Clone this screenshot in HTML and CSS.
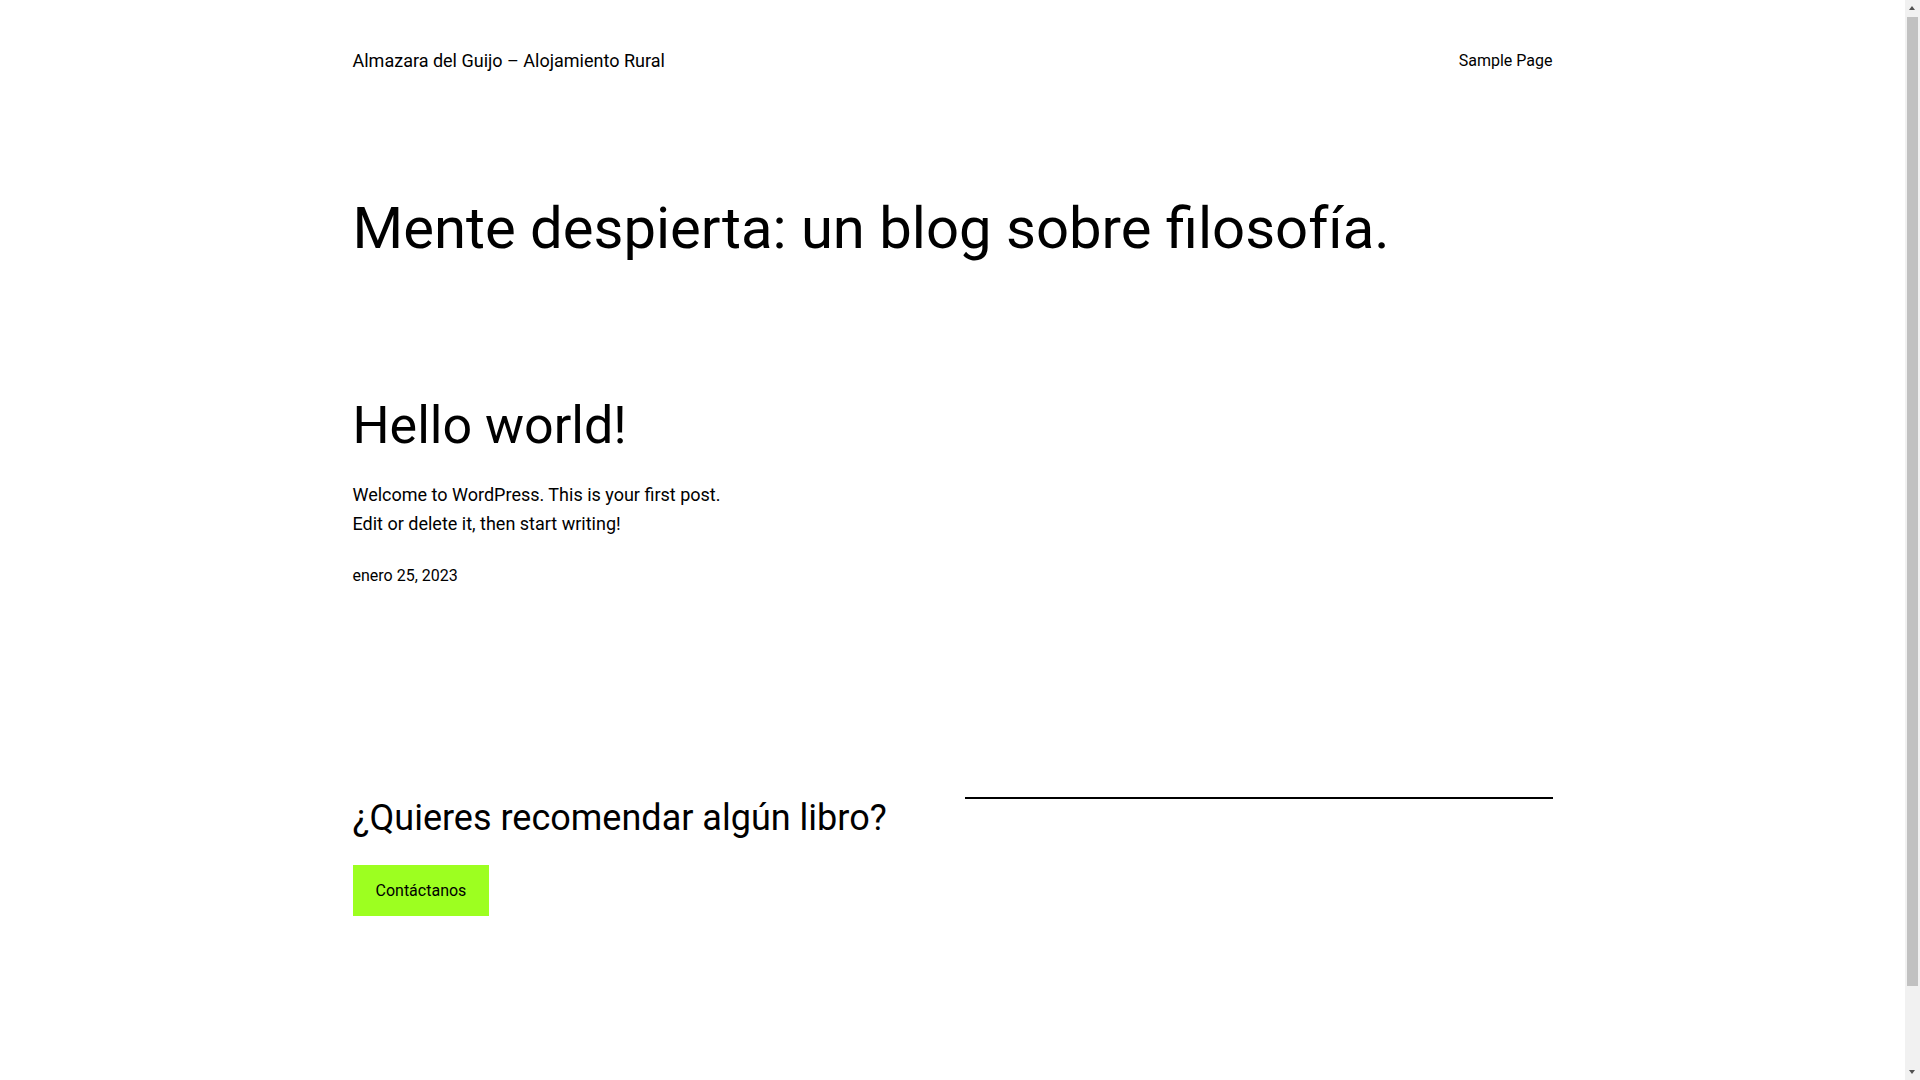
FILE: index.html
```html
<!DOCTYPE html>
<html lang="es">
<head>
<meta charset="utf-8">
<title>Almazara del Guijo – Alojamiento Rural</title>
<link rel="stylesheet" href="styles.css">
</head>
<body>
<div class="page">
  <header class="site-header">
    <a class="site-title" href="#">Almazara del Guijo – Alojamiento Rural</a>
    <nav class="site-nav"><a href="#">Sample Page</a></nav>
  </header>

  <main class="site-main">
    <h1 class="blog-title">Mente despierta: un blog sobre filosofía.</h1>

    <article class="post">
      <h2 class="post-title"><a href="#">Hello world!</a></h2>
      <div class="post-excerpt">
        <p>Welcome to WordPress. This is your first post.<br>Edit or delete it, then start writing!</p>
      </div>
      <div class="post-date">enero 25, 2023</div>
    </article>
  </main>

  <footer class="site-footer">
    <div class="cta-col">
      <h2 class="cta-title">¿Quieres recomendar algún libro?</h2>
      <a class="cta-button" href="#">Contáctanos</a>
    </div>
    <div class="sep-col">
      <hr class="separator">
    </div>
  </footer>
</div>

<div class="scrollbar" aria-hidden="true">
  <span class="sb-arrow sb-up"></span>
  <span class="sb-thumb"></span>
  <span class="sb-arrow sb-down"></span>
</div>
</body>
</html>
```
FILE: styles.css
```css
html, body {
  padding: 0;
  background: #ffffff;
  color: #000000;
}

html {
  margin: 0;
}

body {
  margin: 0 15px 0 0;
  font-family: Roboto, "Liberation Sans", Arial, sans-serif;
  font-size: 18px;
  line-height: 1.6;
}

a {
  color: inherit;
  text-decoration: none;
}

.page {
  max-width: 1200px;
  margin: 0 auto;
  padding-bottom: 250px;
}

.site-header {
  display: flex;
  justify-content: space-between;
  align-items: center;
  padding-top: 47px;
  line-height: 27px;
}

.site-title {
  font-size: 18px;
}

.site-nav {
  font-size: 16px;
}

.site-main {
  padding-top: 120px;
}

.blog-title {
  margin: 0;
  font-size: 58px;
  font-weight: 400;
  line-height: 1.2;
  letter-spacing: 0;
}

.post {
  padding-top: 131px;
}

.post-title {
  margin: 0;
  font-size: 52px;
  font-weight: 400;
  line-height: 1.2;
}

.post-excerpt p {
  margin: 24px 0 0;
  font-size: 18px;
  line-height: 28.8px;
}

.post-date {
  margin-top: 24px;
  font-size: 16px;
  line-height: 25.6px;
}

.site-footer {
  display: grid;
  grid-template-columns: 1fr 1fr;
  column-gap: 25px;
  margin-top: 209px;
}

.cta-title {
  margin: 0;
  font-size: 36px;
  font-weight: 400;
  line-height: 1.2;
}

.cta-button {
  display: inline-flex;
  align-items: center;
  justify-content: center;
  margin-top: 25px;
  height: 51px;
  padding: 0 23px;
  background: #9dff20;
  color: #000;
  font-size: 16px;
}

.separator {
  margin: 0;
  border: 0;
  border-top: 2px solid #000;
}

/* imitation of the browser's vertical scrollbar */
.scrollbar {
  position: fixed;
  top: 0;
  right: 0;
  width: 15px;
  height: 100vh;
  background: #f1f1f1;
}

.sb-thumb {
  position: absolute;
  top: 17px;
  left: 2px;
  width: 11px;
  height: 969px;
  background: #c1c1c1;
}

.sb-arrow {
  position: absolute;
  left: 4px;
  width: 0;
  height: 0;
  border-left: 3.5px solid transparent;
  border-right: 3.5px solid transparent;
}

.sb-up {
  top: 6px;
  border-bottom: 4px solid #505050;
}

.sb-down {
  bottom: 6px;
  border-top: 4px solid #505050;
}
```
